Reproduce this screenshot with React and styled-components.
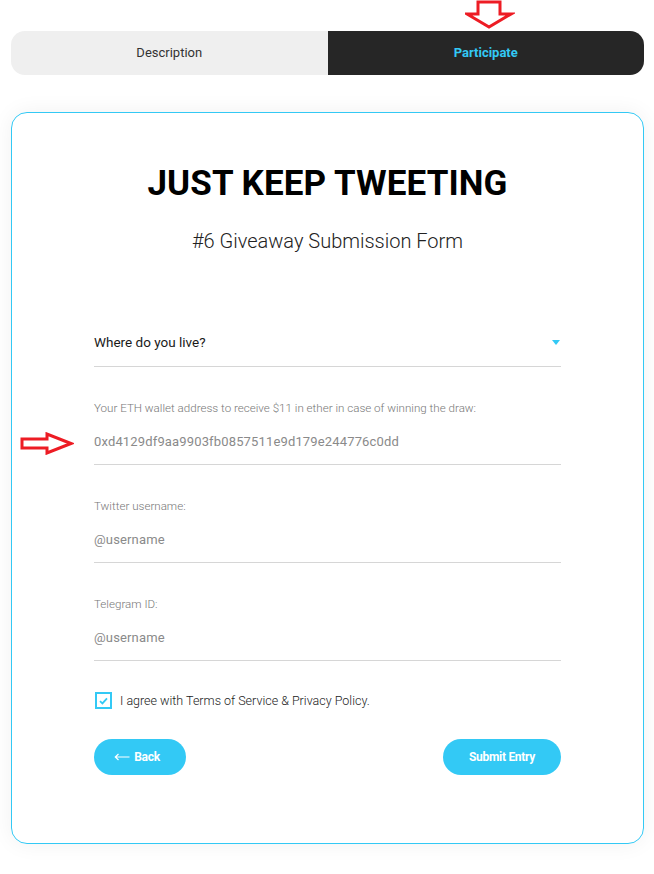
import React, {useState} from 'react';
import styled, {createGlobalStyle} from "styled-components";

const GlobalStyle = createGlobalStyle`
  body {
    margin: 0;
    background: #fff;
    font-family: Roboto, "Noto Sans", sans-serif;
  }
`

const accent = '#33c9f5'

const Page = styled.div`
  position: relative;
  width: 654px;
  height: 874px;
  padding: 31px 10px 0 11px;
  box-sizing: border-box;
`

const Tabs = styled.div`
  display: flex;
  height: 44px;
  border-radius: 14px;
  overflow: hidden;
`

const Tab = styled.div`
  flex: 1;
  display: flex;
  align-items: center;
  justify-content: center;
  padding-bottom: 1px;
  font-size: 13px;
  font-weight: ${p => p.$active ? 700 : 400};
  color: ${p => p.$active ? accent : '#333'};
  background: ${p => p.$active ? '#262626' : '#efefef'};
`

const Card = styled.div`
  margin-top: 37px;
  height: 732px;
  box-sizing: border-box;
  border: 1px solid ${accent};
  border-radius: 16px;
  box-shadow: 0 0 22px rgba(0, 0, 0, 0.06);
  padding: 50px 82px 0 82px;
  display: flex;
  flex-direction: column;
`

const Title = styled.h1`
  margin: 0;
  text-align: center;
  font-size: 35px;
  font-weight: 700;
  color: #000;
  line-height: 42px;
  letter-spacing: 0.1px;
`

const Subtitle = styled.h2`
  margin: 24px 0 0;
  text-align: center;
  font-size: 20px;
  font-weight: 300;
  color: #222;
  line-height: 24px;
`

const Form = styled.div`
  margin-top: 81px;
  display: flex;
  flex-direction: column;
`

const SelectRow = styled.div`
  display: flex;
  align-items: center;
  justify-content: space-between;
  line-height: 16px;
  padding-bottom: 16px;
  border-bottom: 1px solid #d6d6d6;
  font-size: 13.5px;
  color: #1a1a1a;
`

const Caret = styled.span`
  width: 0;
  height: 0;
  margin-right: 1px;
  border-left: 4px solid transparent;
  border-right: 4px solid transparent;
  border-top: 5px solid ${accent};
`

const Field = styled.div`
  margin-top: 34px;
  padding-bottom: 14px;
  border-bottom: 1px solid #d6d6d6;
  display: flex;
  flex-direction: column;
`

const Label = styled.label`
  font-size: 11.6px;
  font-weight: 300;
  color: #777;
  line-height: 14px;
`

const Input = styled.input`
  margin-top: 19px;
  height: 16px;
  line-height: 16px;
  border: none;
  outline: none;
  padding: 0;
  font-family: inherit;
  font-size: 13px;
  color: #8a8a8a;
  letter-spacing: 0.15px;
  &::placeholder { color: #8a8a8a; }
`

const CheckRow = styled.div`
  margin-top: 31px;
  display: flex;
  align-items: center;
  gap: 8px;
  font-size: 12.5px;
  font-weight: 300;
  color: #222;
`

const Box = styled.span`
  width: 13px;
  height: 13px;
  border: 2px solid ${accent};
  margin-left: 1px;
  display: flex;
  align-items: center;
  justify-content: center;
`

const Buttons = styled.div`
  margin-top: 30px;
  display: flex;
  justify-content: space-between;
`

const Button = styled.button`
  height: 36px;
  width: ${p => p.$w}px;
  border: none;
  border-radius: 18px;
  background: ${accent};
  color: #fff;
  font-family: inherit;
  font-size: 12px;
  font-weight: 700;
  letter-spacing: -0.3px;
  display: flex;
  align-items: center;
  justify-content: center;
  gap: 4px;
  padding: 0 ${p => p.$shift || 0}px 1px 0;
  cursor: pointer;
`

const Marker = styled.svg`
  position: absolute;
  left: ${p => p.$x}px;
  top: ${p => p.$y}px;
`

function App() {
    const [wallet, setWallet] = useState('0xd4129df9aa9903fb0857511e9d179e244776c0dd')

    return (
        <Page>
            <GlobalStyle/>
            <Tabs>
                <Tab>Description</Tab>
                <Tab $active>Participate</Tab>
            </Tabs>
            <Card>
                <Title>JUST KEEP TWEETING</Title>
                <Subtitle>#6 Giveaway Submission Form</Subtitle>
                <Form>
                    <SelectRow>
                        <span>Where do you live?</span>
                        <Caret/>
                    </SelectRow>
                    <Field>
                        <Label>Your ETH wallet address to receive $11 in ether in case of winning the draw:</Label>
                        <Input value={wallet} onChange={e => setWallet(e.target.value)}/>
                    </Field>
                    <Field>
                        <Label>Twitter username:</Label>
                        <Input placeholder={'@username'}/>
                    </Field>
                    <Field>
                        <Label>Telegram ID:</Label>
                        <Input placeholder={'@username'}/>
                    </Field>
                    <CheckRow>
                        <Box>
                            <svg width="9" height="8" viewBox="0 0 9 8">
                                <path d="M1 4.2 L3.4 6.4 L8 1.4" fill="none" stroke={accent} strokeWidth="1.8"/>
                            </svg>
                        </Box>
                        <span>I agree with Terms of Service &amp; Privacy Policy.</span>
                    </CheckRow>
                    <Buttons>
                        <Button $w={92} $shift={6}>
                            <svg width="16" height="8" viewBox="0 0 16 8">
                                <path d="M15.5 4 H1.5 M4.5 1 L1.3 4 L4.5 7" fill="none" stroke="#fff" strokeWidth="1.2"/>
                            </svg>
                            Back
                        </Button>
                        <Button $w={118}>Submit Entry</Button>
                    </Buttons>
                </Form>
            </Card>

            {/* red annotation arrows */}
            <Marker $x={465} $y={0} width="50" height="30" viewBox="0 0 50 30">
                <path d="M13 2 H35 V14 H46 L24 27 L2 14 H13 Z" fill="#fff" stroke="#ed1c24" strokeWidth="3" strokeLinejoin="miter"/>
            </Marker>
            <Marker $x={20} $y={432} width="54" height="23" viewBox="0 0 54 23">
                <path d="M2 7 H27 V2 L51 11.5 L27 21 V16 H2 Z" fill="#fff" stroke="#ed1c24" strokeWidth="3"/>
            </Marker>
        </Page>
    );
}

export default App;
